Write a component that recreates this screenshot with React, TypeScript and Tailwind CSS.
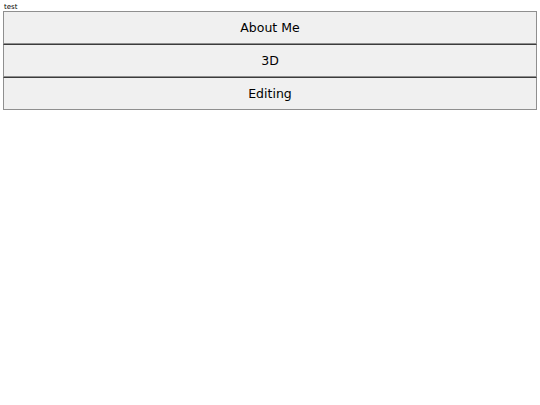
export default function App() {
  const items = ["About Me", "3D", "Editing"];
  return (
    <div className="bg-white min-h-[405px] px-[3px]" style={{ fontFamily: '"DejaVu Sans", sans-serif' }}>
      <div className="text-[7px] leading-[8px] h-[11px] pt-[3px] text-black pl-[1px]">test</div>
      <div className="flex flex-col">
        {items.map((t, i) => (
          <button
            key={t}
            className={`w-full h-[33px] bg-[#f0f0f0] text-[12.5px] pt-[2px] text-black border border-[#8f8f8f] ${i > 0 ? "border-t-[#3c3c3c]" : ""} flex items-center justify-center`}
          >
            {t}
          </button>
        ))}
      </div>
    </div>
  );
}
